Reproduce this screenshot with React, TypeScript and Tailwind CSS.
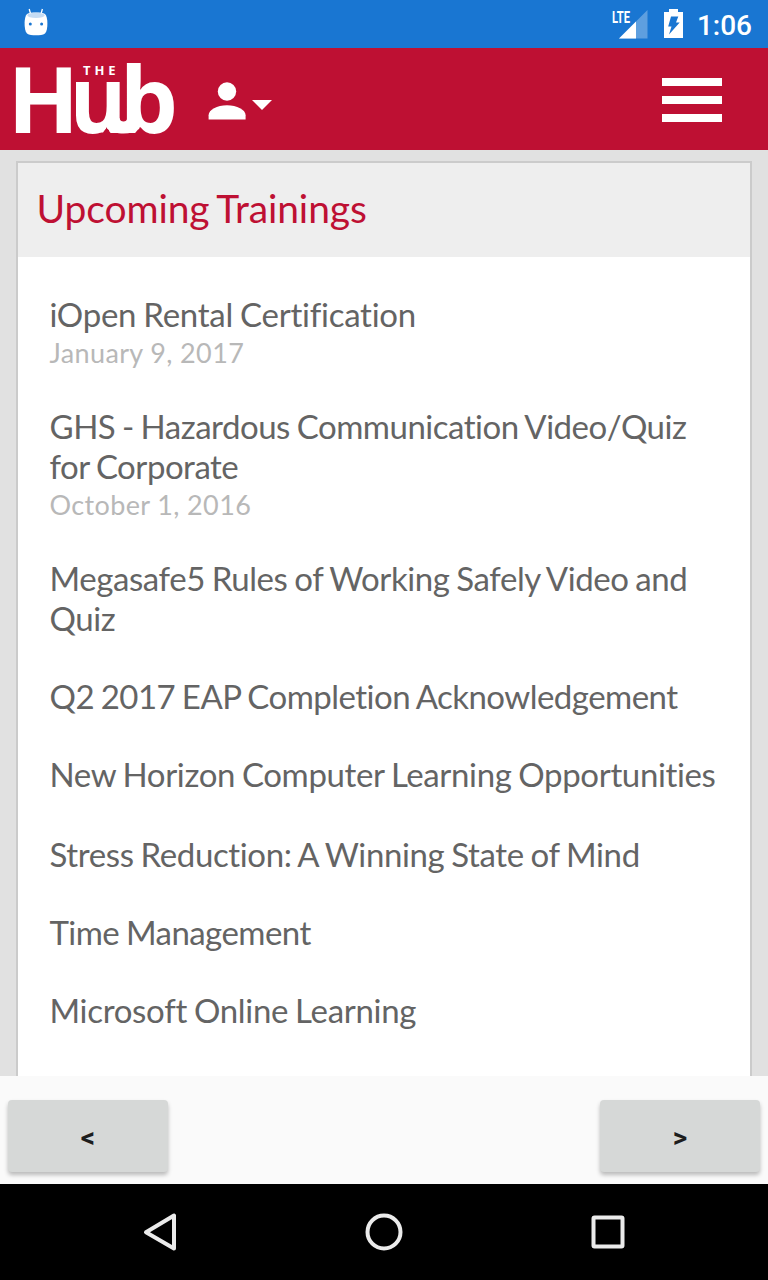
type Training = { title: string; date?: string; tracking: string; margin?: string };

const trainings: Training[] = [
  {
    title: 'iOpen Rental Certification',
    date: 'January 9, 2017',
    tracking: 'tracking-[-0.25px]',
  },
  {
    title: 'GHS - Hazardous Communication Video/Quiz for Corporate',
    date: 'October 1, 2016',
    tracking: 'tracking-[-0.48px]',
  },
  { title: 'Megasafe5 Rules of Working Safely Video and Quiz', tracking: 'tracking-[-0.42px]' },
  { title: 'Q2 2017 EAP Completion Acknowledgement', tracking: 'tracking-[-0.53px]' },
  {
    title: 'New Horizon Computer Learning Opportunities',
    tracking: 'tracking-[-0.36px]',
    margin: 'mb-10',
  },
  { title: 'Stress Reduction: A Winning State of Mind', tracking: 'tracking-[-0.37px]' },
  { title: 'Time Management', tracking: 'tracking-[-0.54px]' },
  { title: 'Microsoft Online Learning', tracking: 'tracking-[-0.3px]' },
];

function StatusBar() {
  return (
    <div className="flex h-12 shrink-0 items-center bg-[#1976d2] pr-4 pl-6 text-white">
      <svg className="h-12 w-6" viewBox="0 0 24 48" fill="currentColor">
        <path d="M5.2 9 6.6 14M18.4 9 17 14" stroke="currentColor" strokeWidth="1.3" />
        <path d="M3 14C5 12.8 8 12.6 12 12.6s7 .2 9 1.4c1.6 1.7 2.4 5 2.4 9 0 4.5-.5 8.5-2.4 10.5C19 35 15.5 35.3 12 35.3S5 35 3 33.5C1.1 31.5.6 27.5.6 23c0-4 .8-7.3 2.4-9Z" />
        <ellipse cx="12" cy="15.3" rx="8.8" ry="2.6" fill="#c5dcf4" />
        <circle cx="6.3" cy="24" r="1.5" fill="#1976d2" />
        <circle cx="17.6" cy="24" r="1.5" fill="#1976d2" />
      </svg>
      <svg className="ml-auto h-12 w-9" viewBox="0 0 36 48" fill="currentColor">
        <path d="M35.5 10v28.5H7Z" opacity=".3" />
        <path d="M24 21.5v17H7Z" />
        <text
          x="0"
          y="22.7"
          textLength="18"
          lengthAdjust="spacingAndGlyphs"
          className="font-['Roboto'] text-[17px] font-bold"
        >
          LTE
        </text>
      </svg>
      <svg className="ml-4 h-12 w-[19px]" viewBox="0 0 19 48" fill="currentColor">
        <path d="M5 9h9v3h5v26H0V12h5Z" />
        <path d="M7 16.5h7.3L12 22.5h3.700L5 34.500 7.500 26.500H4.200Z" fill="#1976d2" />
      </svg>
      <span className="mt-[3px] ml-3.5 font-['Roboto',sans-serif] text-[28px] leading-8 font-medium">
        1:06
      </span>
    </div>
  );
}

function Logo() {
  return (
    <svg
      className="h-[102px] w-[160px] overflow-visible"
      viewBox="0 0 160 102"
      fill="currentColor"
      role="img"
      aria-label="The Hub"
    >
      <g className="font-['Open_Sans'] text-[92px] font-bold">
        <text transform="translate(-8.5 85) scale(1.02 1)">H</text>
        <text transform="translate(53.6 85) scale(.94 1.01)">u</text>
        <text transform="translate(103.8 85) scale(1 .99)">b</text>
      </g>
      {/* joins the foot of the u to the bowl of the b */}
      <path d="M103.500 70c.4 2.400 1.900 3.500 4 3.500s3.400-1.100 4-3.500l11 2v8.500c-3.500 3.500-8.500 5-15 5s-12.500-1.500-16.500-5V72Z" />
      <path d="M87 87.500 90.500 80.500 97 87.500ZM117 87.500 122.500 81 126 87.500Z" fill="#be1033" />
      <path d="M76 84.500 90.500 79.500 87 84.500Z" />
      <text x="67" y="27" textLength="32.5" className="font-['Open_Sans'] text-[13px] font-bold">
        THE
      </text>
    </svg>
  );
}

function Header() {
  return (
    <header className="flex h-[102px] shrink-0 items-center bg-[#be1033] px-4 text-white">
      <Logo />
      <button className="mt-[3px] ml-8 flex" aria-label="Account">
        <svg className="h-10 w-16" viewBox="0 0 64 40" fill="currentColor">
          <circle cx="19" cy="10.5" r="9.2" />
          <path d="M.6 38.5v-4.200c0-5.500 8.500-10 18.400-10s18.600 4.500 18.600 10v4.200Z" />
          <path d="M44 19h20L54 29Z" />
        </svg>
      </button>
      <button className="mt-0.5 mr-[30px] ml-auto flex flex-col gap-2.5" aria-label="Menu">
        <span className="h-2 w-15 bg-white" />
        <span className="h-2 w-15 bg-white" />
        <span className="h-2 w-15 bg-white" />
      </button>
    </header>
  );
}

function NavButton({ label }: { label: string }) {
  return (
    <button className="h-18 w-40 rounded-[4px] bg-[#d6d8d7] pt-1 font-['Roboto',sans-serif] text-[28px] font-bold text-[#1d1d1d] shadow-[0_3px_4px_rgba(0,0,0,0.26)]">
      {label}
    </button>
  );
}

export default function App() {
  return (
    <div className="flex h-[1280px] w-[768px] flex-col overflow-hidden font-['Lato',sans-serif] [font-variant-ligatures:none]">
      <StatusBar />
      <Header />
      <main className="min-h-0 flex-1 overflow-hidden bg-[#e1e1e1] px-4 pt-[11px]">
        <section className="h-[1000px] border-2 border-[#cbcbcb] bg-white">
          <h1 className="h-[94px] bg-[#eee] pt-[21px] pl-[18.5px] text-[39px] leading-[48px] tracking-[-0.1px] [word-spacing:-2px] text-[#be1033]">
            Upcoming Trainings
          </h1>
          <ul className="pt-[37px] pr-7 pl-[31.5px]">
            {trainings.map((item) => (
              <li key={item.title} className={item.margin ?? 'mb-[38px]'}>
                <p
                  className={`text-[33px] leading-10 [word-spacing:-1.2px] text-[#646464] ${item.tracking}`}
                >
                  {item.title}
                </p>
                {item.date && (
                  <p className="pt-1 text-[27px] leading-[30px] tracking-[0.37px] text-[#b8b8b8]">
                    {item.date}
                  </p>
                )}
              </li>
            ))}
          </ul>
        </section>
      </main>
      <div className="flex h-27 shrink-0 justify-between bg-[#fafafa] px-2 pt-6">
        <NavButton label="<" />
        <NavButton label=">" />
      </div>
      <nav className="flex h-24 shrink-0 items-center justify-between bg-black px-[140px] text-[#ebebeb]">
        <svg className="size-10" viewBox="0 0 40 40" fill="none" stroke="currentColor" strokeWidth="4">
          <path d="M34 3.5v33L6 20.3Z" strokeLinejoin="round" />
        </svg>
        <svg className="size-10" viewBox="0 0 40 40" fill="none" stroke="currentColor" strokeWidth="4">
          <circle cx="20" cy="20" r="16.5" />
        </svg>
        <svg className="size-10" viewBox="0 0 40 40" fill="none" stroke="currentColor" strokeWidth="4">
          <rect x="5.5" y="5.5" width="29" height="29" rx="1" />
        </svg>
      </nav>
    </div>
  );
}
